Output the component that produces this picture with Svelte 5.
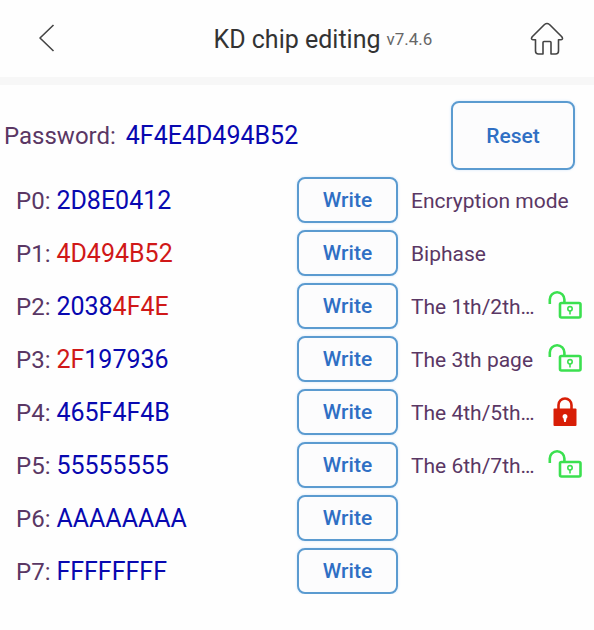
<!--
  Chip editing screen: password on top, then one row per memory page
  with its hex value, a write button and the lock state.
-->
<script lang="ts">
  type Tone = 'blue' | 'red';
  type Lock = 'open' | 'closed';

  interface Page {
    name: string;
    parts: [string, Tone][];
    note?: string;
    lock?: Lock;
  }

  const version = 'v7.4.6';
  const password = '4F4E4D494B52';

  const pages: Page[] = [
    { name: 'P0', parts: [['2D8E0412', 'blue']], note: 'Encryption mode' },
    { name: 'P1', parts: [['4D494B52', 'red']], note: 'Biphase' },
    { name: 'P2', parts: [['2038', 'blue'], ['4F4E', 'red']], note: 'The 1th/2th…', lock: 'open' },
    { name: 'P3', parts: [['2F', 'red'], ['197936', 'blue']], note: 'The 3th page', lock: 'open' },
    { name: 'P4', parts: [['465F4F4B', 'blue']], note: 'The 4th/5th…', lock: 'closed' },
    { name: 'P5', parts: [['55555555', 'blue']], note: 'The 6th/7th…', lock: 'open' },
    { name: 'P6', parts: [['AAAAAAAA', 'blue']] },
    { name: 'P7', parts: [['FFFFFFFF', 'blue']] },
  ];
</script>

<header class="topbar">
  <button class="icon-button" type="button" aria-label="Back">
    <svg width="34" height="34" viewBox="0 0 34 34">
      <path d="M23.500 3 L10 16 L23.500 29" />
    </svg>
  </button>
  <h1 class="title">KD chip editing</h1>
  <div class="topbar-end">
    <span class="version">{version}</span>
    <button class="icon-button" type="button" aria-label="Home">
      <svg width="34" height="34" viewBox="0 0 34 34">
        <path
          d="M14.500 2.500 Q17 0.500 19.500 2.500 L31.800 14.800 Q33.500 17.500 31 17.800 H28.500 V29 Q28.500 32 25.500 32 H21 V20.500 Q21 19.500 20 19.500 H14 Q13 19.500 13 20.500 V32 H8.500 Q5.500 32 5.500 29 V17.800 H3 Q0.500 17.500 2.200 14.800 Z"
        />
      </svg>
    </button>
  </div>
</header>

<main>
  <section class="password">
    <p class="value">Password: <span class="hex blue">{password}</span></p>
    <button class="action reset" type="button">Reset</button>
  </section>

  <ul class="pages">
    {#each pages as page (page.name)}
      <li class="page">
        <span class="value">
          {page.name}: {#each page.parts as [text, tone]}<span class="hex {tone}">{text}</span>{/each}
        </span>
        <button class="action" type="button" aria-label="Write {page.name}">Write</button>
        <span class="info">
          {#if page.note}<span class="note">{page.note}</span>{/if}
          {#if page.lock === 'open'}
            <svg class="lock open" width="34" height="34" viewBox="0 0 34 34" role="img" aria-label="Unlocked">
              <path d="M1.800 15 V10.500 A7.300 7.300 0 0 1 16.400 10.500 V14" />
              <rect x="12" y="14" width="20.500" height="14.500" rx="1.500" />
              <circle cx="22" cy="19.800" r="2.200" />
              <path d="M22 22 V25.500" />
            </svg>
          {:else if page.lock === 'closed'}
            <svg class="lock closed" width="34" height="34" viewBox="0 0 34 34" role="img" aria-label="Locked">
              <path class="shackle" d="M10.500 15 V10 A6.500 6.500 0 0 1 23.500 10 V15" />
              <rect x="5.500" y="13.500" width="23" height="17.500" rx="1" />
              <path class="hole" d="M17 19 a2.500 2.500 0 0 1 1.500 4.500 L17.800 27 H16.200 L15.500 23.500 A2.500 2.500 0 0 1 17 19 Z" />
            </svg>
          {/if}
        </span>
      </li>
    {/each}
  </ul>
</main>

<style>
  :global(body) {
    margin: 0;
    background: #fefefe;
    font-family: Roboto, 'Liberation Sans', sans-serif;
    color: #5a3764;
  }

  /* Header */

  .topbar {
    display: grid;
    grid-template-columns: 1fr auto 1fr;
    column-gap: 6px;
    align-items: center;
    height: 77px;
    padding: 0 30px;
    border-bottom: 8px solid #f7f7f7;
    color: #333;
  }

  .topbar-end {
    display: flex;
    align-items: center;
    justify-content: space-between;
  }

  .icon-button {
    display: flex;
    padding: 0;
    border: 0;
    background: none;
    color: #444;
    cursor: pointer;
  }

  .icon-button svg {
    fill: none;
    stroke: currentColor;
    stroke-width: 1.6;
    stroke-linejoin: round;
  }

  .title {
    margin: 0;
    padding-top: 2px;
    font-size: 25px;
    font-weight: 400;
    white-space: nowrap;
  }

  .version {
    font-size: 17px;
    color: #666;
  }

  /* Password */

  .password {
    display: flex;
    align-items: center;
    justify-content: space-between;
    padding: 16px 19px 7px 4px;
  }

  .value {
    margin: 0;
    font-size: 24px;
    white-space: nowrap;
  }

  .hex {
    font-size: 25px;
  }

  .password .hex {
    margin-left: 4px;
  }

  .blue {
    color: #0808b0;
  }

  .red {
    color: #d01818;
  }

  .action {
    height: 46px;
    padding: 0;
    border: 2px solid #5b9bd0;
    border-radius: 8px;
    background: #fcfcfd;
    box-shadow: 0 0 3px #d4e6fa;
    font: 500 21px Roboto, 'Liberation Sans', sans-serif;
    color: #2f6fc4;
    cursor: pointer;
  }

  .reset {
    width: 124px;
    height: 69px;
  }

  /* Memory pages */

  .pages {
    display: grid;
    gap: 7px;
    margin: 0;
    padding: 0 12px 0 16px;
    list-style: none;
  }

  .page {
    display: grid;
    grid-template-columns: 1fr 101px 171px;
    column-gap: 13px;
    align-items: center;
  }

  .info {
    display: flex;
    align-items: center;
    justify-content: space-between;
  }

  .note {
    padding-top: 2px;
    font-size: 21px;
    white-space: nowrap;
  }

  .lock.open {
    fill: none;
    stroke: #3be04f;
    stroke-width: 2.6;
  }

  .lock.open circle,
  .lock.open circle + path {
    stroke-width: 1.6;
  }

  .lock.closed {
    fill: #d81e06;
  }

  .shackle {
    fill: none;
    stroke: #d81e06;
    stroke-width: 2.6;
  }

  .hole {
    fill: #fff;
  }
</style>
